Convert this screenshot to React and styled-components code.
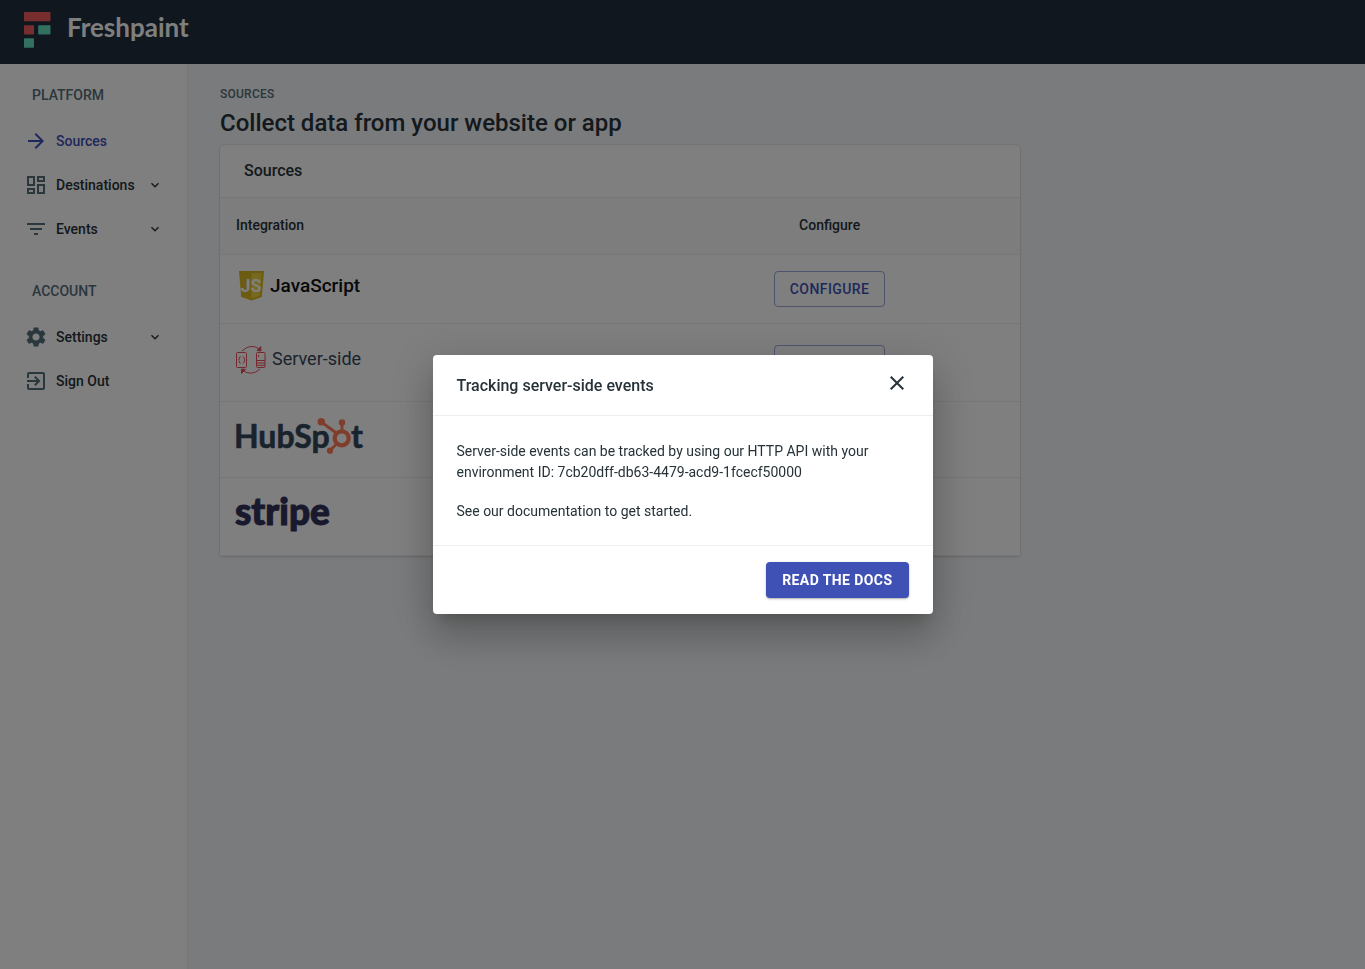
import React from "react";
import styled, { createGlobalStyle, css } from "styled-components";
import {
  MdArrowForward,
  MdClose,
  MdExitToApp,
  MdExpandMore,
  MdFilterList,
  MdOutlineDashboard,
  MdSettings,
} from "react-icons/md";

const GlobalStyle = createGlobalStyle`
  :root {
    --primary: #3f51b5;
    --text: #263238;
    --muted: #546e7a;
    --divider: #eeeeee;
    --background: #f4f6f8;
  }
  * {
    box-sizing: border-box;
  }
  body {
    margin: 0;
    background-color: var(--background);
    color: var(--text);
    font-family: Roboto, "Liberation Sans", sans-serif;
    font-size: 14px;
  }
  h1, h2, p, ul {
    margin: 0;
    padding: 0;
  }
  button {
    font-family: inherit;
    cursor: pointer;
  }
`;

const Page = styled.div`
  min-height: 100vh;
  display: flex;
  flex-direction: column;
`;

const TopBar = styled.header`
  height: 64px;
  padding: 0 24px;
  display: flex;
  align-items: flex-start;
  background-color: #202e3c;
`;

const Brand = styled.a`
  display: flex;
  gap: 16px;
  padding-top: 12px;
  color: #fff;
  font-family: Lato, sans-serif;
  font-size: 26px;
  font-weight: 700;
  line-height: 30px;
  text-decoration: none;
`;

const Body = styled.div`
  flex: 1;
  display: flex;
`;

const Sidebar = styled.nav`
  flex: 0 0 188px;
  padding: 20px 24px;
  display: flex;
  flex-direction: column;
  gap: 29px;
  background-color: #fff;
  border-right: 1px solid var(--divider);
`;

const NavLabel = styled.h2`
  margin: 0 8px 13px;
  color: var(--muted);
  font-size: 14px;
  font-weight: 500;
  line-height: 22px;
  text-transform: uppercase;
`;

const NavList = styled.ul`
  list-style: none;
`;

const NavItem = styled.a`
  height: 44px;
  display: flex;
  align-items: center;
  gap: 8px;
  color: ${({ $active }) => ($active ? "var(--primary)" : "var(--text)")};
  font-weight: 500;
  text-decoration: none;
  > svg:first-child {
    color: ${({ $active }) => ($active ? "var(--primary)" : "var(--muted)")};
  }
  > svg:last-child:not(:first-child) {
    margin-left: auto;
  }
`;

const Content = styled.main`
  flex: 1;
  padding: 20px 32px;
`;

const Overline = styled.p`
  color: var(--muted);
  font-size: 12px;
  font-weight: 500;
  letter-spacing: 0.02em;
  line-height: 20px;
  text-transform: uppercase;
`;

const PageTitle = styled.h1`
  padding: 3px 0 6px;
  font-size: 24px;
  font-weight: 500;
  line-height: 32px;
`;

const Card = styled.section`
  max-width: 800px;
  background-color: #fff;
  border-radius: 4px;
  box-shadow: 0 0 0 1px rgba(63, 63, 68, 0.05), 0 1px 3px 0 rgba(63, 63, 68, 0.15);
`;

const CardTitle = styled.h2`
  padding: 16px 24px;
  border-bottom: 1px solid var(--divider);
  font-size: 16px;
  font-weight: 500;
  line-height: 20px;
`;

const SourceTable = styled.table`
  width: 100%;
  table-layout: fixed;
  border-collapse: separate;
  border-spacing: 0;
  th,
  td {
    padding: 16px;
    border-bottom: 1px solid var(--divider);
    text-align: left;
    vertical-align: middle;
  }
  th {
    padding-bottom: 18px;
    background-color: #fafafa;
    font-weight: 500;
    line-height: 22px;
  }
  th:last-child,
  td:last-child {
    width: 47.6%;
    text-align: center;
  }
`;

const SourceLogo = styled.div`
  height: ${({ $height }) => $height}px;
  padding-left: ${({ $inset }) => $inset || 0}px;
  margin-bottom: 6px;
  display: flex;
  align-items: center;
  gap: ${({ $gap }) => $gap || 0}px;
  svg {
    flex: none;
    overflow: visible;
  }
`;

const SourceName = styled.span`
  padding-bottom: 2px;
  color: ${({ $color }) => $color};
  font-size: ${({ $size }) => $size}px;
  font-weight: ${({ $weight }) => $weight};
`;

const buttonBase = css`
  height: 36px;
  border-radius: 4px;
  font-size: 14px;
  font-weight: 500;
  letter-spacing: 0.03em;
  text-transform: uppercase;
`;

const OutlinedButton = styled.button`
  ${buttonBase}
  padding: 0 15px;
  display: block;
  margin: 0 auto;
  background: transparent;
  border: 1px solid rgba(63, 81, 181, 0.5);
  color: var(--primary);
`;

const ContainedLink = styled.a`
  ${buttonBase}
  padding: 0 16px;
  display: flex;
  align-items: center;
  background-color: var(--primary);
  box-shadow: 0 1px 1px rgba(0, 0, 0, 0.14), 0 1px 3px rgba(0, 0, 0, 0.2);
  color: #fff;
  font-weight: 700;
  text-decoration: none;
`;

const Backdrop = styled.div`
  position: fixed;
  inset: 0;
  z-index: 10;
  padding: 24px;
  display: flex;
  align-items: center;
  justify-content: center;
  background-color: rgba(0, 0, 0, 0.5);
`;

const Dialog = styled.div`
  width: 100%;
  max-width: 500px;
  background-color: #fff;
  border-radius: 4px;
  box-shadow: 0 11px 15px -7px rgba(0, 0, 0, 0.2),
    0 24px 38px 3px rgba(0, 0, 0, 0.14), 0 9px 46px 8px rgba(0, 0, 0, 0.12);
`;

const DialogHeader = styled.div`
  height: 61px;
  padding: 0 24px;
  display: flex;
  align-items: center;
  justify-content: space-between;
  border-bottom: 1px solid var(--divider);
  h2 {
    font-size: 16px;
    font-weight: 500;
  }
`;

const CloseButton = styled.button`
  padding: 0 0 4px;
  display: flex;
  background: none;
  border: 0;
  color: var(--text);
`;

const DialogBody = styled.div`
  padding: 25px 24px 23px;
  display: flex;
  flex-direction: column;
  gap: 18px;
  line-height: 21px;
`;

const DialogFooter = styled.div`
  padding: 16px 24px;
  display: flex;
  justify-content: flex-end;
  border-top: 1px solid var(--divider);
`;

const FreshpaintMark = () => (
  <svg width="27" height="36" viewBox="0 0 27 36" aria-hidden="true">
    <rect width="26.5" height="9.3" rx="0.8" fill="#f05c5c" />
    <rect y="13.2" width="10" height="9.3" rx="0.8" fill="#f05c5c" />
    <rect x="14.2" y="13.2" width="12.3" height="9.3" rx="0.8" fill="#65e0c0" />
    <rect y="26.2" width="10" height="9.6" rx="0.8" fill="#65e0c0" />
  </svg>
);

const JavaScriptMark = () => (
  <svg width="25" height="30" viewBox="0 0 25 30" aria-hidden="true">
    <path d="M0 0h25l-2.2 26-10.3 3.5L2.2 26z" fill="#d6b822" />
    <path d="M12.5 2.2h10.2l-1.9 22.2-8.3 2.9z" fill="#efd53c" />
    <text
      x="12"
      y="21"
      fill="#fff"
      textAnchor="middle"
      fontFamily="Roboto, sans-serif"
      fontSize="18"
      fontWeight="700"
    >
      JS
    </text>
  </svg>
);

const ServerMark = () => (
  <svg
    width="30"
    height="28"
    viewBox="0 0 30 28"
    fill="none"
    stroke="#e8505b"
    strokeWidth="1"
    aria-hidden="true"
  >
    <rect x="0.5" y="6.5" width="10" height="15" rx="1" />
    <rect x="20.5" y="6.5" width="8.5" height="15" rx="1" />
    <path d="M4.6 10.8q-1.3 0-1.3 1.4v.9l-.9.9.9.9v.9q0 1.4 1.3 1.4M6.8 10.8q1.3 0 1.3 1.4v.9l.9.9-.9.9v.9q0 1.4-1.3 1.4" />
    <path d="M20.5 14.5H29M20.5 17H29M20.5 19.3H29M22.5 9v2" />
    <path d="M6 5Q15-3.5 24.5 3.5M24 23Q15 31 6.5 24" />
    <path d="M24.7.5l.3 4.5-4-.5zM5.5 27.5V23l4 .5z" fill="#e8505b" />
  </svg>
);

const HubSpotLogo = () => (
  <svg width="128" height="37" viewBox="0 0 128 37" role="img" aria-label="HubSpot">
    <g
      fill="#33475b"
      stroke="#33475b"
      strokeWidth="0.6"
      fontFamily="Lato, sans-serif"
      fontSize="32"
      fontWeight="700"
    >
      <text x="-2" y="30">HubSp</text>
      <text x="115" y="30">t</text>
    </g>
    <g stroke="#ff7a59" fill="none">
      <circle cx="105.7" cy="20.3" r="7" strokeWidth="4.2" />
      <path d="M106 5v9M86 4.5l15 11M94 32.5l6-6" strokeWidth="2.8" />
    </g>
    <g fill="#ff7a59">
      <circle cx="106" cy="4.5" r="3.2" />
      <circle cx="85.3" cy="3.7" r="3.8" />
      <circle cx="94" cy="32.7" r="3.1" />
    </g>
  </svg>
);

const StripeLogo = () => (
  <svg width="95" height="39" viewBox="0 0 95 39" role="img" aria-label="Stripe">
    <text
      x="-1"
      y="31"
      fill="#32325d"
      stroke="#32325d"
      strokeWidth="1"
      fontFamily="Lato, sans-serif"
      fontSize="37"
      fontWeight="900"
    >
      stripe
    </text>
  </svg>
);

const navGroups = [
  {
    label: "Platform",
    items: [
      { name: "Sources", icon: MdArrowForward, active: true },
      { name: "Destinations", icon: MdOutlineDashboard, expandable: true },
      { name: "Events", icon: MdFilterList, expandable: true },
    ],
  },
  {
    label: "Account",
    items: [
      { name: "Settings", icon: MdSettings, expandable: true },
      { name: "Sign Out", icon: MdExitToApp },
    ],
  },
];

const sources = [
  {
    id: "javascript",
    logo: (
      <SourceLogo $height={30} $gap={6} $inset={3}>
        <JavaScriptMark />
        <SourceName $color="#111" $size={19} $weight={500}>JavaScript</SourceName>
      </SourceLogo>
    ),
  },
  {
    id: "server",
    logo: (
      <SourceLogo $height={39} $gap={6}>
        <ServerMark />
        <SourceName $color="#33475b" $size={18} $weight={400}>Server-side</SourceName>
      </SourceLogo>
    ),
  },
  { id: "hubspot", logo: <SourceLogo $height={37}><HubSpotLogo /></SourceLogo> },
  { id: "stripe", logo: <SourceLogo $height={39}><StripeLogo /></SourceLogo> },
];

const App = () => (
  <>
    <GlobalStyle />
    <Page>
      <TopBar>
        <Brand href="#">
          <FreshpaintMark />
          Freshpaint
        </Brand>
      </TopBar>
      <Body>
        <Sidebar>
          {navGroups.map(({ label, items }) => (
            <div key={label}>
              <NavLabel>{label}</NavLabel>
              <NavList>
                {items.map(({ name, icon: Icon, active, expandable }) => (
                  <li key={name}>
                    <NavItem href="#" $active={active}>
                      <Icon size={24} />
                      {name}
                      {expandable && <MdExpandMore size={16} />}
                    </NavItem>
                  </li>
                ))}
              </NavList>
            </div>
          ))}
        </Sidebar>
        <Content>
          <Overline>Sources</Overline>
          <PageTitle>Collect data from your website or app</PageTitle>
          <Card>
            <CardTitle>Sources</CardTitle>
            <SourceTable>
              <thead>
                <tr>
                  <th>Integration</th>
                  <th>Configure</th>
                </tr>
              </thead>
              <tbody>
                {sources.map(({ id, logo }) => (
                  <tr key={id}>
                    <td>{logo}</td>
                    <td>
                      <OutlinedButton type="button">Configure</OutlinedButton>
                    </td>
                  </tr>
                ))}
              </tbody>
            </SourceTable>
          </Card>
        </Content>
      </Body>
    </Page>
    <Backdrop>
      <Dialog role="dialog" aria-modal="true" aria-labelledby="dialog-title">
        <DialogHeader>
          <h2 id="dialog-title">Tracking server-side events</h2>
          <CloseButton type="button" aria-label="Close">
            <MdClose size={24} />
          </CloseButton>
        </DialogHeader>
        <DialogBody>
          <p>
            Server-side events can be tracked by using our HTTP API with your
            environment ID: 7cb20dff-db63-4479-acd9-1fcecf50000
          </p>
          <p>See our documentation to get started.</p>
        </DialogBody>
        <DialogFooter>
          <ContainedLink href="#">Read the docs</ContainedLink>
        </DialogFooter>
      </Dialog>
    </Backdrop>
  </>
);

export default App;
